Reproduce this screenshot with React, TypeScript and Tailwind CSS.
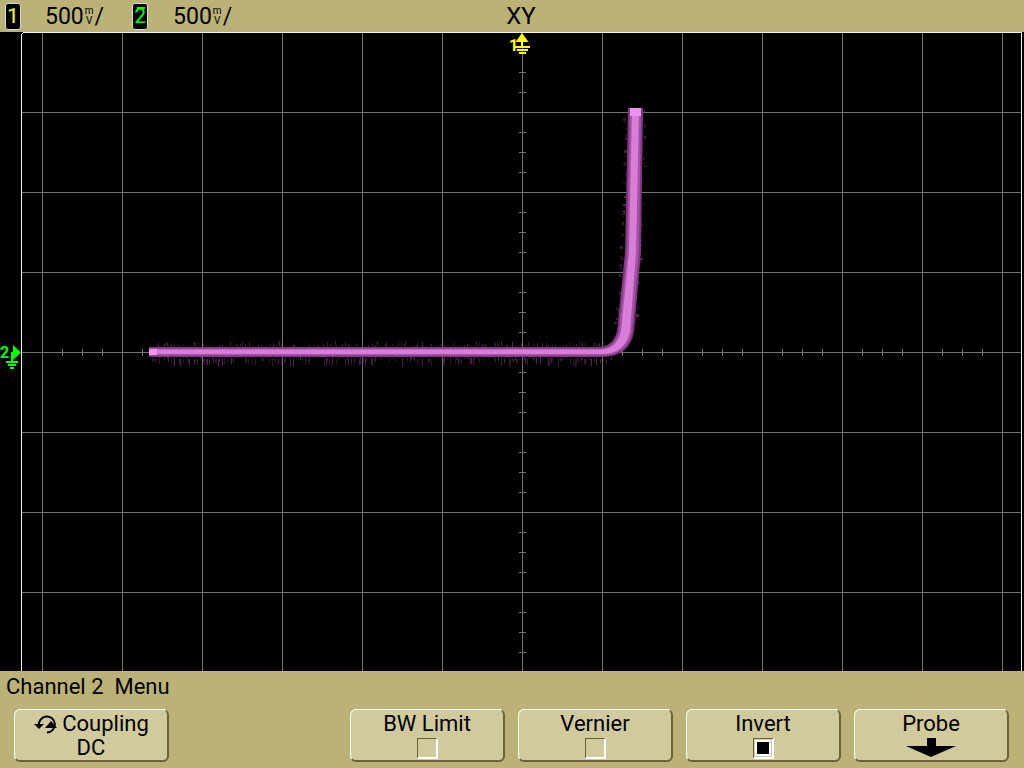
import { useMemo } from 'react';

const FONT = { fontFamily: 'Roboto, "Liberation Sans", sans-serif' };

function makeRng(seed: number) {
  let s = seed >>> 0;
  return () => {
    s = (s * 1664525 + 1013904223) >>> 0;
    return s / 4294967296;
  };
}

type Speck = { x: number; y: number; w: number; h: number; o: number };

function useNoise() {
  return useMemo(() => {
    const r = makeRng(11);
    const out: Speck[] = [];
    // around the horizontal run (screen y = 320)
    for (let x = 150; x < 612; x += 1.5) {
      if (r() < 0.45) {
        const len = 1 + Math.floor(r() * 5);
        out.push({ x, y: 314 - len + Math.floor(r() * 3), w: 1, h: len, o: 0.3 + r() * 0.4 });
      }
      if (r() < 0.55) {
        const len = 1 + Math.floor(r() * 8);
        out.push({ x, y: 325 + Math.floor(r() * 3), w: 1, h: len, o: 0.3 + r() * 0.4 });
      }
    }
    // around the vertical run
    for (let y = 78; y < 300; y += 2) {
      const t = (y - 76) / 224;
      const cx = 635.5 - t * t * 10;
      if (r() < 0.3) {
        const len = 1 + Math.floor(r() * 3);
        out.push({ x: cx - 8 - len - Math.floor(r() * 2), y, w: len, h: 1 + Math.floor(r() * 3), o: 0.3 + r() * 0.35 });
      }
      if (r() < 0.3) {
        const len = 1 + Math.floor(r() * 3);
        out.push({ x: cx + 8 + Math.floor(r() * 2), y, w: len, h: 1 + Math.floor(r() * 3), o: 0.3 + r() * 0.35 });
      }
    }
    return out;
  }, []);
}

// the trace is drawn as three nested bands, widest and darkest first
const OUTER = 'M149 315 L598 315 Q613 315 617 299 L625 220 L628 76 L643 76 L641 220 L634 300 Q629 325 602 325 L149 325 Z';
const MIDDLE = 'M149 316.5 L599 316.5 Q615 316.5 619 299 L627 220 L630 77 L641 77 L639 220 L632 300 Q627 323.5 601 323.5 L149 323.5 Z';
const CORE = 'M151 317.5 L600 317.5 Q617 317.5 621 299 L629 220 L632 79 L639 79 L636 220 L630 300 Q625 322 601 322 L151 322 Z';

function Screen() {
  const noise = useNoise();
  const vLines = Array.from({ length: 13 }, (_, i) => 42 + i * 80);
  const hLines = Array.from({ length: 7 }, (_, i) => 80 + i * 80);
  const vTicks = Array.from({ length: 32 }, (_, i) => i * 20).filter((y) => y % 80 !== 0);
  const hTicks = Array.from({ length: 50 }, (_, i) => 42 + i * 20).filter((x) => (x - 42) % 80 !== 0 && x < 1020);

  return (
    <div className="h-[639px] bg-black">
      <svg width="1024" height="639" viewBox="0 0 1024 639" className="block">
        <g stroke="#727272" strokeWidth="1" shapeRendering="crispEdges">
          {vLines.map((x) => (
            <line key={'v' + x} x1={x + 0.5} y1={1} x2={x + 0.5} y2={639} />
          ))}
          {hLines.map((y) => (
            <line key={'h' + y} x1={22} y1={y + 0.5} x2={1021} y2={y + 0.5} />
          ))}
          {vTicks.map((y) => (
            <line key={'vt' + y} x1={519} y1={y + 0.5} x2={526} y2={y + 0.5} />
          ))}
          {hTicks.map((x) => (
            <line key={'ht' + x} x1={x + 0.5} y1={317} x2={x + 0.5} y2={324} />
          ))}
        </g>
        {/* frame */}
        <path d="M21.5 639 V4 Q21.5 0.5 25 0.5 H1021.5 V639" fill="none" stroke="#f4f4f4" strokeWidth="1" shapeRendering="crispEdges" />

        {/* trace noise */}
        <g fill="#7a357a" shapeRendering="crispEdges">
          {noise.map((s, i) => (
            <rect key={i} x={s.x} y={s.y} width={s.w} height={s.h} opacity={s.o} />
          ))}
        </g>
        {/* trace */}
        <path d={OUTER} fill="#7e387f" />
        <path d={MIDDLE} fill="#a453a5" />
        <path d={CORE} fill="#d97dd9" />
        <rect x="630" y="76" width="11" height="8" fill="#ee90ee" />
        <rect x="149" y="317" width="8" height="6" fill="#ee96ee" />

        {/* channel 1 marker */}
        <text x="509" y="19" fill="#ffff00" fontSize="16" fontWeight="700" style={FONT}>
          1
        </text>
        <polygon points="522,1 515.5,10 528.5,10" fill="#ffff00" />
        <g stroke="#ffff00" strokeWidth="1.5" shapeRendering="crispEdges">
          <line x1="522" y1="10" x2="522" y2="15" />
          <line x1="515" y1="15" x2="530" y2="15" />
          <line x1="517" y1="18" x2="528" y2="18" />
          <line x1="519" y1="21" x2="526" y2="21" />
        </g>

        {/* channel 2 marker */}
        <text x="0" y="326" fill="#00ff00" fontSize="16" fontWeight="700" style={FONT}>
          2
        </text>
        <polygon points="13,313 13,328 21,320.5" fill="#00ff00" />
        <g stroke="#00ff00" strokeWidth="1.5" shapeRendering="crispEdges">
          <line x1="12" y1="320" x2="12" y2="330" />
          <line x1="6" y1="330" x2="18" y2="330" />
          <line x1="8" y1="333" x2="16" y2="333" />
          <line x1="10" y1="336" x2="14" y2="336" />
        </g>
      </svg>
    </div>
  );
}

function Badge({ n, color, bar }: { n: string; color: string; bar?: boolean }) {
  return (
    <div className="relative flex h-[27px] w-[16px] items-center justify-center rounded-[3px] border border-[#d8d8d8] bg-black">
      {bar && <div className="absolute left-[4px] top-[3px] h-[2px] w-[8px]" style={{ background: color }} />}
      <span className="text-[21px] leading-none" style={{ color, ...FONT }}>
        {n}
      </span>
    </div>
  );
}

function Scale() {
  return (
    <div className="flex items-center text-[23px] leading-none text-black" style={FONT}>
      <span>500</span>
      <span className="ml-[1px] flex flex-col items-center text-[10px] leading-[10px]">
        <span>m</span>
        <span>V</span>
      </span>
      <span className="ml-[1px]">/</span>
    </div>
  );
}

function Softkey({ children }: { children?: React.ReactNode }) {
  return (
    <div className="flex h-[53px] w-[155px] flex-col items-center rounded-[6px] border-t border-l border-r-2 border-b-2 border-t-white border-l-white border-r-[#6a6238] border-b-[#6a6238] bg-[#d0ca9c] pt-[2px] text-[22px] leading-[24px] text-black" style={FONT}>
      {children}
    </div>
  );
}

function Check({ on }: { on?: boolean }) {
  return (
    <div className="mt-[2px] h-[21px] w-[21px] border-t border-l border-r-2 border-b-2 border-t-[#6a6238] border-l-[#6a6238] border-r-white border-b-white p-[1px]">
      {on && <div className="h-full w-full border-2 border-white bg-black" />}
    </div>
  );
}

function CouplingIcon() {
  return (
    <svg width="27" height="19" viewBox="0 0 27 19" className="mr-[2px]">
      <path d="M6 11 A8 8 0 1 1 14 17.5" fill="none" stroke="#000" strokeWidth="2" />
      <polygon points="1,9 11,9 6,14" fill="#000" />
      <polygon points="12,13 24,13 18,6" fill="#000" />
    </svg>
  );
}

export default function App() {
  return (
    <div className="flex h-[768px] w-[1024px] flex-col overflow-hidden bg-[#bab277]" style={FONT}>
      {/* status line */}
      <div className="flex h-[32px] items-center">
        <div className="ml-[5px]">
          <Badge n="1" color="#ffff00" />
        </div>
        <div className="ml-[24px]">
          <Scale />
        </div>
        <div className="ml-[28px]">
          <Badge n="2" color="#00ff00" bar />
        </div>
        <div className="ml-[25px]">
          <Scale />
        </div>
        <div className="ml-[274px] text-[24px] leading-none text-black">XY</div>
      </div>

      <Screen />

      {/* softkey menu */}
      <div className="flex flex-1 flex-col px-[6px]">
        <div className="mt-[4px] text-[22px] leading-[24px] text-black">Channel 2&nbsp; Menu</div>
        <div className="mt-[10px] flex gap-[13px] pl-[8px]">
          <Softkey>
            <div className="flex items-center">
              <CouplingIcon />
              <span>Coupling</span>
            </div>
            <span>DC</span>
          </Softkey>
          <div className="w-[155px]" />
          <Softkey>
            <span>BW Limit</span>
            <Check />
          </Softkey>
          <Softkey>
            <span>Vernier</span>
            <Check />
          </Softkey>
          <Softkey>
            <span>Invert</span>
            <Check on />
          </Softkey>
          <Softkey>
            <span>Probe</span>
            <svg width="50" height="20" viewBox="0 0 50 20" className="mt-[2px]">
              <rect x="21" y="0" width="9" height="8" fill="#000" />
              <polygon points="0,8 50,8 25,19" fill="#000" />
            </svg>
          </Softkey>
        </div>
      </div>
    </div>
  );
}
